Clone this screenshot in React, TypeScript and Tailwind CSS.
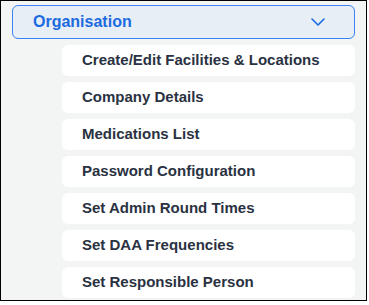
import React from "react";

const items = [
  "Create/Edit Facilities & Locations",
  "Company Details",
  "Medications List",
  "Password Configuration",
  "Set Admin Round Times",
  "Set DAA Frequencies",
  "Set Responsible Person",
];

const App: React.FC = () => {
  return (
    <div className="w-[369px] h-[305px] bg-white font-['Liberation_Sans',Arial,sans-serif]">
      <div className="w-[367px] h-[301px] border border-black bg-[#f3f4f4] pt-[4px] pl-[11px] pr-[11px]">
        <div className="h-[34px] flex items-center justify-between rounded-[6px] border border-[#3b82f6] bg-[#e8eef6] pl-[20px] pr-[29px]">
          <div className="text-[16px] font-bold text-[#1c6ae0]">Organisation</div>
          <svg width="14" height="8" viewBox="0 0 14 8" fill="none">
            <path d="M1 1l6 6 6-6" stroke="#1c6ae0" strokeWidth="1.6" strokeLinecap="round" strokeLinejoin="round" />
          </svg>
        </div>
        <div className="flex flex-col gap-[6px] pl-[50px] pt-[6px]">
          {items.map((item, index) => (
            <div
              key={index}
              className="h-[31px] flex items-center rounded-[6px] bg-white pl-[20px] text-[15px] font-bold text-[#2a3242]"
            >
              {item}
            </div>
          ))}
        </div>
      </div>
    </div>
  );
};

export default App;
